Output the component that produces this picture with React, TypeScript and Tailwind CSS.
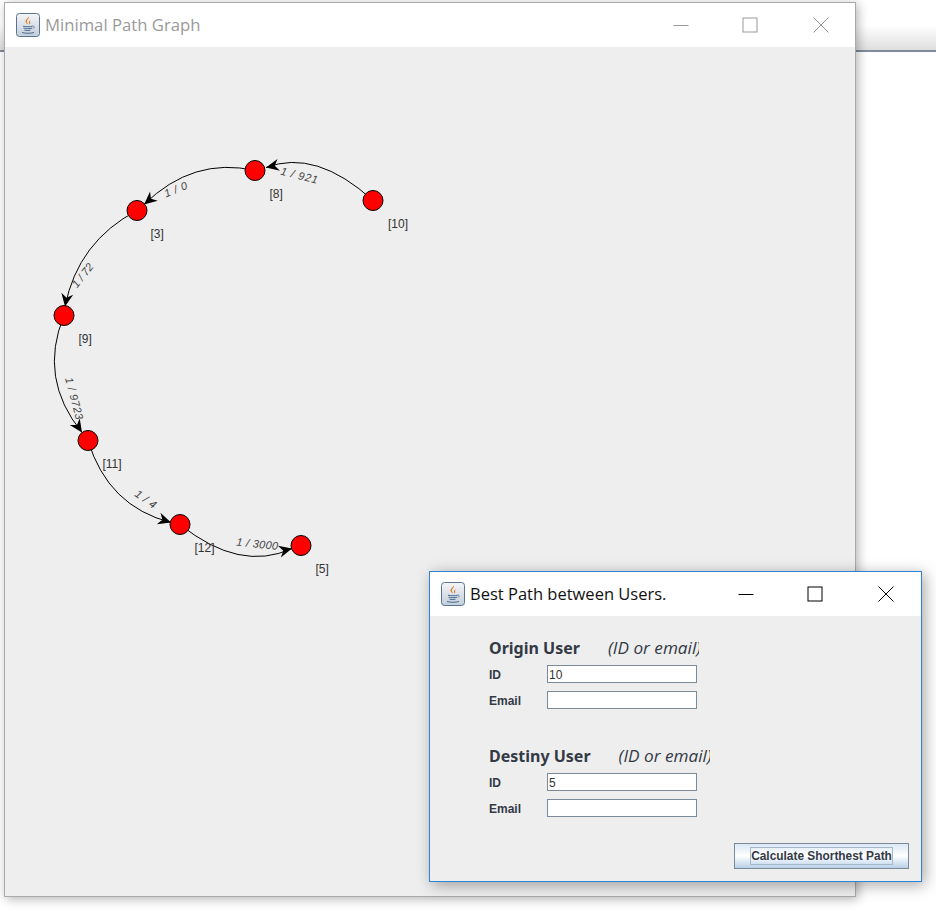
const sans = "font-['Liberation_Sans',Arial,sans-serif]";

function JavaIcon() {
  return (
    <svg width="24" height="24" viewBox="0 0 24 24" className="shrink-0">
      <defs>
        <linearGradient id="javaBg" x1="0" y1="0" x2="0" y2="1">
          <stop offset="0" stopColor="#f4f5f7" />
          <stop offset="1" stopColor="#c3cedb" />
        </linearGradient>
      </defs>
      <rect x="0.5" y="0.5" width="23" height="23" rx="3" fill="url(#javaBg)" stroke="#59748f" />
      <path d="M12.5 3.5c1.5 2-2.5 3.5-1.5 6 .3.8 1 1.5 1.3 2-1-.4-3-1.6-2.8-3.4.2-1.6 2.6-2.6 3-4.6z" fill="#e2761b" />
      <path d="M15 7c-1.3.8-2.5 1.4-2 3 .2.6.4 1 .3 1.5.9-.6 1.2-1.3.8-2.2-.3-.8 0-1.500.9-2.300z" fill="#e2761b" />
      <path d="M7 13.200c2.500.7 7.500.7 9.500 0M7.500 15.200c2 .6 6.500.6 8.500 0M8.500 17.200c1.500.4 4.500.4 6 0" stroke="#47698c" strokeWidth="1" fill="none" />
      <path d="M16.500 13.200c2-.5 2.500 1.500.3 2.300" stroke="#47698c" strokeWidth=".8" fill="none" />
      <path d="M6 19.500c3 1 9 1 12 0" stroke="#47698c" strokeWidth="1" fill="none" />
    </svg>
  );
}

function WindowButtons({ color }: { color: string }) {
  return (
    <div className="flex items-center">
      <svg width="16" height="16" viewBox="0 0 16 16">
        <path d="M0.500 8.500H15.500" stroke={color} />
      </svg>
      <svg width="16" height="16" viewBox="0 0 16 16" className="ml-[53px]">
        <rect x="1" y="1" width="14" height="14" stroke={color} fill="none" />
      </svg>
      <svg width="16" height="16" viewBox="0 0 16 16" className="ml-[55px]">
        <path d="M0.500 0.500L15.500 15.500M15.500 0.500L0.500 15.500" stroke={color} />
      </svg>
    </div>
  );
}

const nodes = [
  { x: 373, y: 200, label: "[10]", lx: 388, ly: 227 },
  { x: 255, y: 170, label: "[8]", lx: 269.5, ly: 197 },
  { x: 137, y: 210, label: "[3]", lx: 150.5, ly: 237 },
  { x: 64, y: 315, label: "[9]", lx: 78.5, ly: 342 },
  { x: 88, y: 440, label: "[11]", lx: 102.5, ly: 467.5 },
  { x: 180, y: 524, label: "[12]", lx: 194.5, ly: 551.5 },
  { x: 301, y: 545, label: "[5]", lx: 315.5, ly: 572.5 },
];

const edges = [
  { d: "M373 200Q316 148 266 167", tip: [266, 167], angle: 168 },
  { d: "M255 170Q193 156 144 204", tip: [144, 204], angle: 140 },
  { d: "M137 210Q78 241 65 306", tip: [65, 306], angle: 100 },
  { d: "M64 315Q38 378 82 432", tip: [82, 432], angle: 56 },
  { d: "M88 440Q108 506 171 522", tip: [171, 522], angle: 18 },
  { d: "M180 524Q240 572 292 548", tip: [292, 548], angle: -14 },
];

const weights = [
  { text: "1 / 921", x: 280, y: 174, angle: 14, spacing: 0.7 },
  { text: "1 / 0", x: 166, y: 197, angle: -22, spacing: 0.6 },
  { text: "1 / 72", x: 77, y: 288, angle: -52, spacing: 0 },
  { text: "1 / 9723", x: 65, y: 378, angle: 75, spacing: 0.5 },
  { text: "1 / 4", x: 134, y: 495, angle: 35, spacing: 0.5 },
  { text: "1 / 3000", x: 236, y: 545, angle: 6, spacing: 0.3 },
];

function PathGraph() {
  return (
    <svg width="850" height="849" viewBox="5 46.5 850 849" className={`block ${sans}`}>
      {edges.map((e, i) => (
        <g key={i}>
          <path d={e.d} fill="none" stroke="#000" strokeWidth="1" />
          <path
            d="M0 0L-13 -6L-9 0L-13 6Z"
            fill="#000"
            transform={`translate(${e.tip[0]} ${e.tip[1]}) rotate(${e.angle})`}
          />
        </g>
      ))}
      {nodes.map((n) => (
        <g key={n.label}>
          <circle cx={n.x} cy={n.y} r="10" fill="#ff0000" stroke="#000" strokeWidth="1" />
          <text x={n.lx} y={n.ly} fontSize="12" fill="#333">
            {n.label}
          </text>
        </g>
      ))}
      {weights.map((w) => (
        <text
          key={w.text}
          x="0"
          y="0"
          fontSize="11"
          fontStyle="italic"
          fill="#444"
          letterSpacing={w.spacing}
          transform={`translate(${w.x} ${w.y}) rotate(${w.angle})`}
        >
          {w.text}
        </text>
      ))}
    </svg>
  );
}

function Field({ label, value }: { label: string; value: string }) {
  return (
    <div className="flex h-[18px] items-center">
      <span className={`w-[58px] pt-[2px] text-[12px] font-bold text-[#333a46] ${sans}`}>{label}</span>
      <input
        readOnly
        value={value}
        className={`h-[18px] w-[150px] border border-[#7a8a99] bg-white px-[1px] pt-[1px] text-[12px] text-[#333] outline-none ${sans}`}
      />
    </div>
  );
}

function UserBlock({ title, id }: { title: string; id: string }) {
  return (
    <div className="flex flex-col">
      <div className="flex h-[24px] items-center whitespace-nowrap text-[#333a46]">
        <span className="font-['Noto_Sans',sans-serif] text-[16px] font-bold">{title}</span>
        {/* hint is clipped by its label box in the original dialog */}
        <span className="ml-[28px] w-[91px] overflow-hidden font-['Open_Sans',sans-serif] text-[17.200px] italic">
          (ID or email)
        </span>
      </div>
      <div className="mt-[5px] flex flex-col gap-[8px]">
        <Field label="ID" value={id} />
        <Field label="Email" value="" />
      </div>
    </div>
  );
}

export default function App() {
  return (
    <div className="relative h-[911px] w-[936px] overflow-hidden bg-white">
      <div className="h-[52px] border-b-2 border-[#7f8b99] bg-gradient-to-b from-white from-50% to-[#dedede]" />

      <div className="absolute left-[4px] top-[2px] flex h-[895px] w-[852px] flex-col border border-[#a9a9a9] bg-[#eeeeee] shadow-[2px_2px_10px_rgba(0,0,0,0.3)]">
        <div className="flex h-[44px] shrink-0 items-center justify-between bg-white pl-[11px] pr-[26px]">
          <div className="flex items-center gap-[5px]">
            <JavaIcon />
            <span className="font-['Open_Sans',sans-serif] text-[16.700px] text-[#9a9a9a]">Minimal Path Graph</span>
          </div>
          <WindowButtons color="#999999" />
        </div>
        <PathGraph />
      </div>

      <div className="absolute left-[429px] top-[571px] flex h-[311px] w-[493px] flex-col border border-[#2b84d6] bg-[#eeeeee] shadow-[3px_3px_14px_rgba(0,0,0,0.35)]">
        <div className="flex h-[44px] shrink-0 items-center justify-between bg-white pl-[11px] pr-[27px]">
          <div className="flex items-center gap-[5px]">
            <JavaIcon />
            <span className="font-['Open_Sans',sans-serif] text-[16.500px] text-[#111]">Best Path between Users.</span>
          </div>
          <WindowButtons color="#000000" />
        </div>
        <div className="flex flex-1 flex-col pl-[59px] pt-[20px]">
          <div className="flex flex-col gap-[35px]">
            <UserBlock title="Origin User" id="10" />
            <UserBlock title="Destiny User" id="5" />
          </div>
          <button className="ml-[245px] mt-[26px] flex h-[26px] w-[175px] items-center justify-center border border-[#7a8a99] bg-gradient-to-b from-[#dce8f4] via-white to-[#b8d0e8]">
            <span className={`h-[18px] border border-[#a3b8cc] pt-[1px] text-[11.900px] leading-[15px] font-bold whitespace-nowrap text-[#333a46] ${sans}`}>
              Calculate Shorthest Path
            </span>
          </button>
        </div>
      </div>
    </div>
  );
}
